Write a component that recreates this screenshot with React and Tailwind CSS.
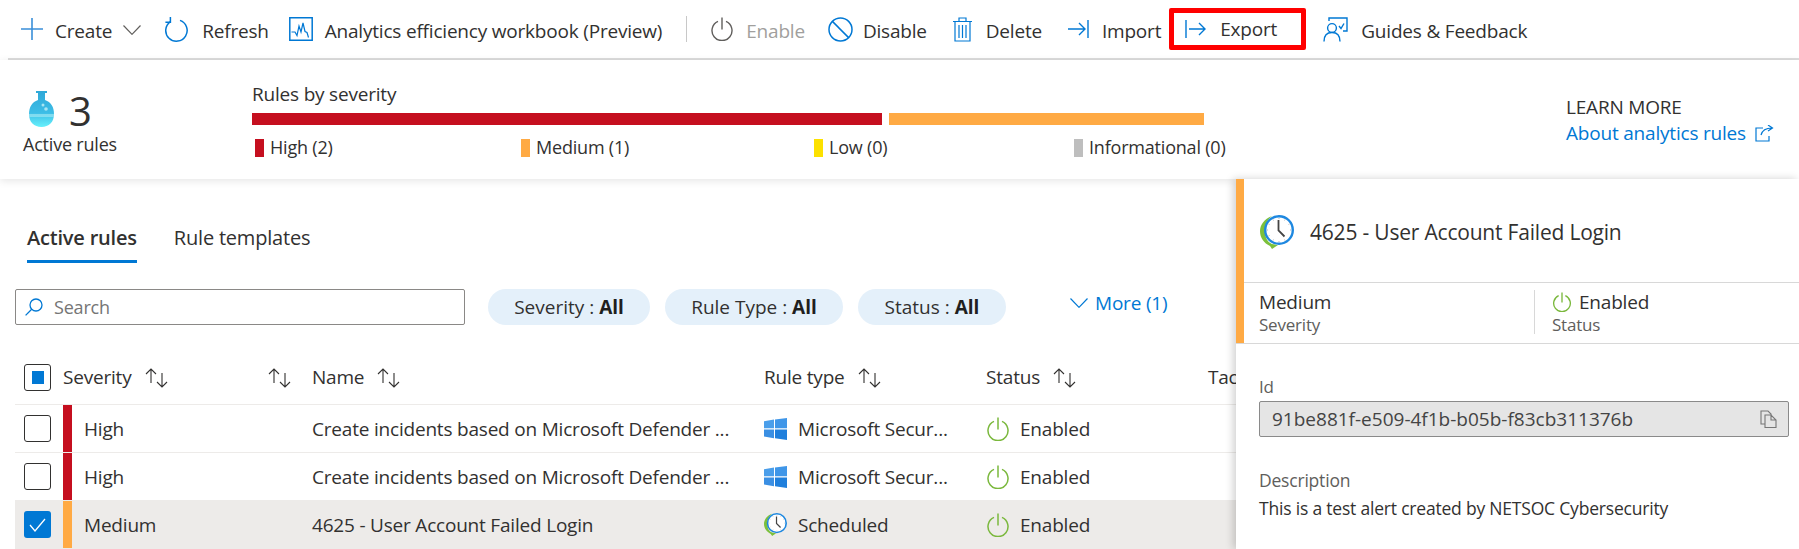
import React from 'react';

const FONT = { fontFamily: '"Open Sans", "Noto Sans", sans-serif' };
const COLS = 'grid grid-cols-[48px_249px_452px_222px_222px_1fr]';

const PlusIcon = () => (
  <svg width="22" height="22" viewBox="0 0 22 22" stroke="#3a8fd9" strokeWidth="1.6" fill="none"><path d="M11 0v22M0 11h22" /></svg>
);
const ChevronIcon = ({ color = '#605e5c', w = 18, h = 10 }) => (
  <svg width={w} height={h} viewBox="0 0 18 10" fill="none" stroke={color} strokeWidth="1.2"><path d="M.5.5 9 9.3 17.5.5" /></svg>
);
const RefreshIcon = () => (
  <svg width="24" height="25" viewBox="0 0 24 25" fill="none" stroke="#0078d4" strokeWidth="1.5"><path d="M15 3.4a10.7 10.7 0 1 1-9.5 1.2" /><path d="M5.4 0v5.2H.4" /></svg>
);
const WorkbookIcon = () => (
  <svg width="24" height="24" viewBox="0 0 24 24" fill="none" stroke="#0078d4" strokeWidth="1.5"><path d="M.8.8h22.4v22.4H.8z" /><path d="M2.5 15 6 15 8 18.5 10 9l2 6 2-9 2 8.5 2 1 1.5 5" strokeWidth="1.2" /></svg>
);
const PowerIcon = ({ color, size = 24, sw = 1.4 }) => (
  <svg width={size} height={size} viewBox="0 0 24 24" fill="none" stroke={color} strokeWidth={sw}><path d="M12 .5v12" /><path d="M8 4.4a10 10 0 1 0 8 0" /></svg>
);
const DisableIcon = () => (
  <svg width="25" height="25" viewBox="0 0 25 25" fill="none" stroke="#0078d4" strokeWidth="1.5"><circle cx="12.5" cy="12.5" r="11.5" /><path d="M4.4 4.4 20.6 20.6" /></svg>
);
const TrashIcon = () => (
  <svg width="19" height="25" viewBox="0 0 19 25" fill="none" stroke="#0078d4" strokeWidth="1.2"><path d="M0 4.5h19M6 4.5V1h7v3.5M2 4.5V24h15V4.5" /><path d="M6 8v13M9.5 8v13M13 8v13" /></svg>
);
const ImportIcon = () => (
  <svg width="21" height="20" viewBox="0 0 21 20" fill="none" stroke="#0078d4" strokeWidth="1.4"><path d="M0 10h17M11 4l6 6-6 6M20 1v18" /></svg>
);
const ExportIcon = () => (
  <svg width="21" height="20" viewBox="0 0 21 20" fill="none" stroke="#0078d4" strokeWidth="1.4"><path d="M1 1v18M4 10h16M14 4l6 6-6 6" /></svg>
);
const GuidesIcon = () => (
  <svg width="25" height="25" viewBox="0 0 25 25" fill="none" stroke="#0078d4" strokeWidth="1.4"><path d="M6 4V1h18v13h-4" /><circle cx="9" cy="11" r="4.4" /><path d="M1 24.5c0-6 3-9 8-9s8 3 8 9" /><path d="M16 9l2 2.5 3-5" /></svg>
);
const LinkIcon = () => (
  <svg width="19" height="17" viewBox="0 0 19 17" fill="none" stroke="#0078d4" strokeWidth="1.2"><path d="M8 3H1v13h13v-5" /><path d="M6 10c1-4 4-7 11-7M13 0l4.5 3L13 6" /></svg>
);
const SearchIcon = () => (
  <svg width="18" height="18" viewBox="0 0 18 18" fill="none" stroke="#0078d4" strokeWidth="1.3"><circle cx="11" cy="7" r="6" /><path d="M6.7 11.3.6 17.4" /></svg>
);
const SortIcon = () => (
  <svg width="24" height="20" viewBox="0 0 24 20" fill="none" stroke="#323130" strokeWidth="1.1"><path d="M7 15V1M2 6l5-5 5 5" /><path d="M18 5v14M13 14l5 5 5-5" /></svg>
);
const CheckIcon = () => (
  <svg width="17" height="14" viewBox="0 0 17 14" fill="none" stroke="#fff" strokeWidth="1.3"><path d="M1 7l5 6L16 1" /></svg>
);
const WindowsIcon = () => (
  <svg width="23" height="22" viewBox="0 0 23 22">
    <path d="M0 3.2 10 1.6v8.6H0z" fill="#4a9eea" />
    <path d="M11 1.4 23 0v10.2H11z" fill="#3f96e8" />
    <path d="M0 11.4h10v8.8L0 18.6z" fill="#3a8fe3" />
    <path d="M11 11.4h12V22l-12-1.7z" fill="#1f7fdc" />
  </svg>
);
const CopyIcon = () => (
  <svg width="17" height="18" viewBox="0 0 17 18" fill="none" stroke="#777" strokeWidth="1.1"><path d="M5 14H1V1h7l3 3v1" /><path d="M5 5h6l5 5v7.5H5zM11 5v5h5" /></svg>
);
const ClockIcon = ({ size = 34 }) => (
  <svg width={size} height={size} viewBox="0 0 34 34">
    <path d="M12 1C4 4 0 10 0 16c0 7 4 12 10 15l2 3 6-4-6-1C7 27 5 22 5 16 5 10 7 5 12 1z" fill="#7cc03c" />
    <circle cx="19" cy="15" r="13.800" fill="#fff" stroke="#1e88e0" strokeWidth="2.400" />
    <path d="M18.500 5v10.500l6 6" fill="none" stroke="#444" strokeWidth="1.800" />
    <path d="M19 3v1M19 26v1M7 15h1M30 15h1M13 4.500l.5 1M25 4.500l-.5 1M8.500 9l1 .5M29.500 9l-1 .5M8.500 21l1-.5M13 25.500l.5-1M25 25.500l-.5-1" stroke="#aaa" strokeWidth=".8" />
  </svg>
);
const FlaskIcon = () => (
  <svg width="25" height="36" viewBox="0 0 25 36">
    <defs>
      <linearGradient id="flask" x1="0" y1="0" x2="0" y2="1">
        <stop offset="0" stopColor="#2fa8d8" />
        <stop offset="0.6" stopColor="#3dbde6" />
        <stop offset="1" stopColor="#66f0fb" />
      </linearGradient>
    </defs>
    <path d="M7 0h11v2h-2v7c6 2 9 7 9 14 0 8-5 13-12.500 13S0 31 0 23C0 16 3 11 9 9V2H7z" fill="url(#flask)" />
    <path d="M0 23h25v3H0z" fill="#9be6f2" opacity=".7" />
    <circle cx="14" cy="14" r="1.500" fill="#a8e4f2" />
    <circle cx="17" cy="18" r="1.800" fill="#a8e4f2" />
  </svg>
);

const ToolbarItem = ({ icon, label, className = '', textClass = 'text-[#323130]', gap = 'gap-[13px]' }) => (
  <div className={`flex items-center ${gap} ${className}`}>
    {icon}
    <span className={`relative top-[2px] whitespace-nowrap ${textClass}`}>{label}</span>
  </div>
);

const Legend = ({ color, label, className = '' }) => (
  <div className={`flex items-center gap-[6px] ${className}`}>
    <span className={`h-[18px] w-[9px] ${color}`}></span>
    <span className="whitespace-nowrap">{label}</span>
  </div>
);

const Chip = ({ label, className = '' }) => (
  <div className={`flex h-[36px] items-center justify-center rounded-full bg-[#e4f0fa] tracking-normal text-[#323130] ${className}`}>
    <span>{label} : <b className="font-bold text-[#201f1e]">All</b></span>
  </div>
);

const Checkbox = ({ state }) => {
  if (state === 'checked') {
    return (
      <div className="ml-[9px] flex h-[27px] w-[27px] items-center justify-center rounded-[3px] bg-[#0078d4]">
        <CheckIcon />
      </div>
    );
  }
  return (
    <div className="ml-[9px] flex h-[27px] w-[27px] items-center justify-center rounded-[3px] border border-[#323130] bg-white">
      {state === 'partial' && <span className="h-[13px] w-[12px] bg-[#0078d4]"></span>}
    </div>
  );
};

const rows = [
  { severity: 'High', bar: 'bg-[#c50f1f]', name: 'Create incidents based on Microsoft Defender ...', type: 'Microsoft Secur...', icon: <WindowsIcon /> },
  { severity: 'High', bar: 'bg-[#c50f1f]', name: 'Create incidents based on Microsoft Defender ...', type: 'Microsoft Secur...', icon: <WindowsIcon /> },
  { severity: 'Medium', bar: 'bg-[#ffaa44]', name: '4625 - User Account Failed Login', type: 'Scheduled', icon: <ClockIcon size={23} />, selected: true }
];

export default function App() {
  return (
    <div style={FONT} className="relative h-[549px] w-full overflow-hidden bg-white text-[19px] tracking-[-0.2px] text-[#323130]">
      {/* toolbar */}
      <div className="ml-2 flex h-[60px] items-center border-b-2 border-[#dcdcdc] pl-[13px]">
        <ToolbarItem icon={<PlusIcon />} label="Create" gap="gap-[12px]" />
        <span className="ml-[11px] mt-[2px]"><ChevronIcon /></span>
        <ToolbarItem icon={<RefreshIcon />} label="Refresh" className="ml-[24px]" />
        <ToolbarItem icon={<WorkbookIcon />} label="Analytics efficiency workbook (Preview)" className="ml-[20px]" gap="gap-[12px]" />
        <span className="ml-[24px] h-[26px] w-px bg-[#c8c8c8]"></span>
        <ToolbarItem icon={<PowerIcon color="#605e5c" />} label="Enable" textClass="text-[#a19f9d]" className="ml-[23px]" gap="gap-[12px]" />
        <ToolbarItem icon={<DisableIcon />} label="Disable" className="ml-[23px]" gap="gap-[10px]" />
        <ToolbarItem icon={<TrashIcon />} label="Delete" className="ml-[26px]" gap="gap-[14px]" />
        <ToolbarItem icon={<ImportIcon />} label="Import" className="ml-[26px]" gap="gap-[13px]" />
        <div className="ml-[8px] flex h-[42px] w-[137px] items-center gap-[14px] rounded-[2px] border-[5px] border-[#ff0000] pl-[11px]">
          <ExportIcon />
          <span>Export</span>
        </div>
        <ToolbarItem icon={<GuidesIcon />} label="Guides & Feedback" className="ml-[17px]" />
      </div>

      {/* summary */}
      <div className="relative z-10 flex h-[119px] bg-white shadow-[0_2px_8px_rgba(0,0,0,0.1)]">
        <div className="w-[252px] pl-[23px] pt-[31px]">
          <div className="flex items-end gap-[15px] pl-[6px]">
            <FlaskIcon />
            <span className="relative top-[2px] text-[40px] leading-[36px] text-[#323130]">3</span>
          </div>
          <div className="mt-[6px] text-[18px] font-medium leading-[22px]">Active rules</div>
        </div>
        <div className="pt-[21px]">
          <div className="text-[19px] font-medium leading-[26px]">Rules by severity</div>
          <div className="mt-[6px] flex gap-[7px]">
            <div className="h-[12px] w-[630px] bg-[#c50f1f]"></div>
            <div className="h-[12px] w-[315px] bg-[#ffaa44]"></div>
          </div>
          <div className="mt-[9px] flex pl-[3px] text-[18px]">
            <Legend color="bg-[#c50f1f]" label="High (2)" className="w-[266px]" />
            <Legend color="bg-[#ffaa44]" label="Medium (1)" className="w-[293px]" />
            <Legend color="bg-[#fce100]" label="Low (0)" className="w-[260px]" />
            <Legend color="bg-[#bebebe]" label="Informational (0)" />
          </div>
        </div>
        <div className="ml-auto w-[233px] pt-[34px]">
          <div className="leading-[26px]">LEARN MORE</div>
          <div className="flex items-center gap-[9px] leading-[27px] text-[#0078d4]">
            <span>About analytics rules</span>
            <LinkIcon />
          </div>
        </div>
      </div>

      {/* main + details panel */}
      <div className="flex h-[370px]">
        <div className="w-[1236px] shrink-0 overflow-hidden">
          <div className="mt-[40px] flex h-[44px] gap-[37px] pl-[27px] pt-[4px] text-[20px]">
            <div className="-mt-[4px] border-b-[3px] border-[#0078d4] pt-[4px] font-semibold">Active rules</div>
            <div>Rule templates</div>
          </div>

          <div className="mt-[26px] flex items-center pl-[15px]">
            <div className="flex h-[36px] w-[450px] items-center gap-[11px] rounded-[2px] border border-[#8a8886] pl-[9px] text-[18px] text-[#757575]">
              <SearchIcon />
              <span>Search</span>
            </div>
            <Chip label="Severity" className="ml-[23px] w-[162px]" />
            <Chip label="Rule Type" className="ml-[15px] w-[178px]" />
            <Chip label="Status" className="ml-[15px] w-[148px]" />
            <div className="ml-[64px] -mt-2 flex items-center gap-[7px] text-[#0078d4]">
              <ChevronIcon color="#0078d4" />
              <span>More (1)</span>
            </div>
          </div>

          <div className="ml-[15px] mt-[26px] w-[1221px] overflow-hidden">
            <div className={`${COLS} h-[54px] items-center border-b border-[#edebe9] font-medium`}>
              <Checkbox state="partial" />
              <div className="flex items-center gap-[12px]">
                <span>Severity</span>
                <SortIcon />
                <span className="ml-auto mr-[21px]"><SortIcon /></span>
              </div>
              <div className="flex items-center gap-[12px]"><span>Name</span><SortIcon /></div>
              <div className="flex items-center gap-[12px]"><span>Rule type</span><SortIcon /></div>
              <div className="flex items-center gap-[12px]"><span>Status</span><SortIcon /></div>
              <div>Tac</div>
            </div>
            {rows.map((row, i) => (
              <div key={i} className={`${COLS} h-[48px] items-center border-b border-[#edebe9] ${row.selected ? 'bg-[#edebe9]' : ''}`}>
                <Checkbox state={row.selected ? 'checked' : 'empty'} />
                <div className="flex h-full items-center">
                  <span className={`h-full w-[9px] ${row.bar}`}></span>
                  <span className="ml-[12px] pt-[2px]">{row.severity}</span>
                </div>
                <div className="whitespace-nowrap pt-[2px]">{row.name}</div>
                <div className="flex items-center gap-[11px]">
                  {row.icon}
                  <span className="whitespace-nowrap pt-[2px]">{row.type}</span>
                </div>
                <div className="flex items-center gap-[10px]">
                  <PowerIcon color="#7ab83c" sw={1.5} />
                  <span className="pt-[2px]">Enabled</span>
                </div>
                <div></div>
              </div>
            ))}
          </div>
        </div>

        <div className="relative z-20 min-w-0 flex-1 bg-white shadow-[-3px_0_8px_rgba(0,0,0,0.18)]">
          <div className="flex h-[165px] border-b border-[#d8d8d8]">
            <div className="w-[8px] bg-[#ffaa44]"></div>
            <div className="min-w-0 flex-1">
              <div className="flex h-[104px] items-center gap-[16px] border-b border-[#d8d8d8] pl-[16px] pt-[2px] text-[21px] font-medium">
                <ClockIcon />
                <span className="pt-[2px]">4625 - User Account Failed Login</span>
              </div>
              <div className="flex pt-[7px]">
                <div className="h-[44px] w-[291px] border-r border-[#d8d8d8] pl-[15px]">
                  <div className="font-medium leading-[24px]">Medium</div>
                  <div className="text-[17px] leading-[22px] text-[#605e5c]">Severity</div>
                </div>
                <div className="pl-[17px]">
                  <div className="flex items-center gap-[7px] font-medium leading-[24px]">
                    <PowerIcon color="#7ab83c" size={20} sw={1.6} />
                    <span>Enabled</span>
                  </div>
                  <div className="text-[17px] leading-[22px] text-[#605e5c]">Status</div>
                </div>
              </div>
            </div>
          </div>
          <div className="pl-[23px] pr-[10px] pt-[32px]">
            <div className="text-[17px] leading-[22px] text-[#605e5c]">Id</div>
            <div className="mt-[3px] flex h-[36px] items-center justify-between rounded-[2px] border border-[#8a8a8a] bg-[#e5e5e5] pl-[12px] pr-[11px] tracking-normal text-[#444]">
              <span>91be881f-e509-4f1b-b05b-f83cb311376b</span>
              <CopyIcon />
            </div>
            <div className="mt-[32px] text-[17.5px] leading-[22px] text-[#605e5c]">Description</div>
            <div className="mt-[5px] text-[17.5px] leading-[24px]">This is a test alert created by NETSOC Cybersecurity</div>
          </div>
        </div>
      </div>
    </div>
  );
}
